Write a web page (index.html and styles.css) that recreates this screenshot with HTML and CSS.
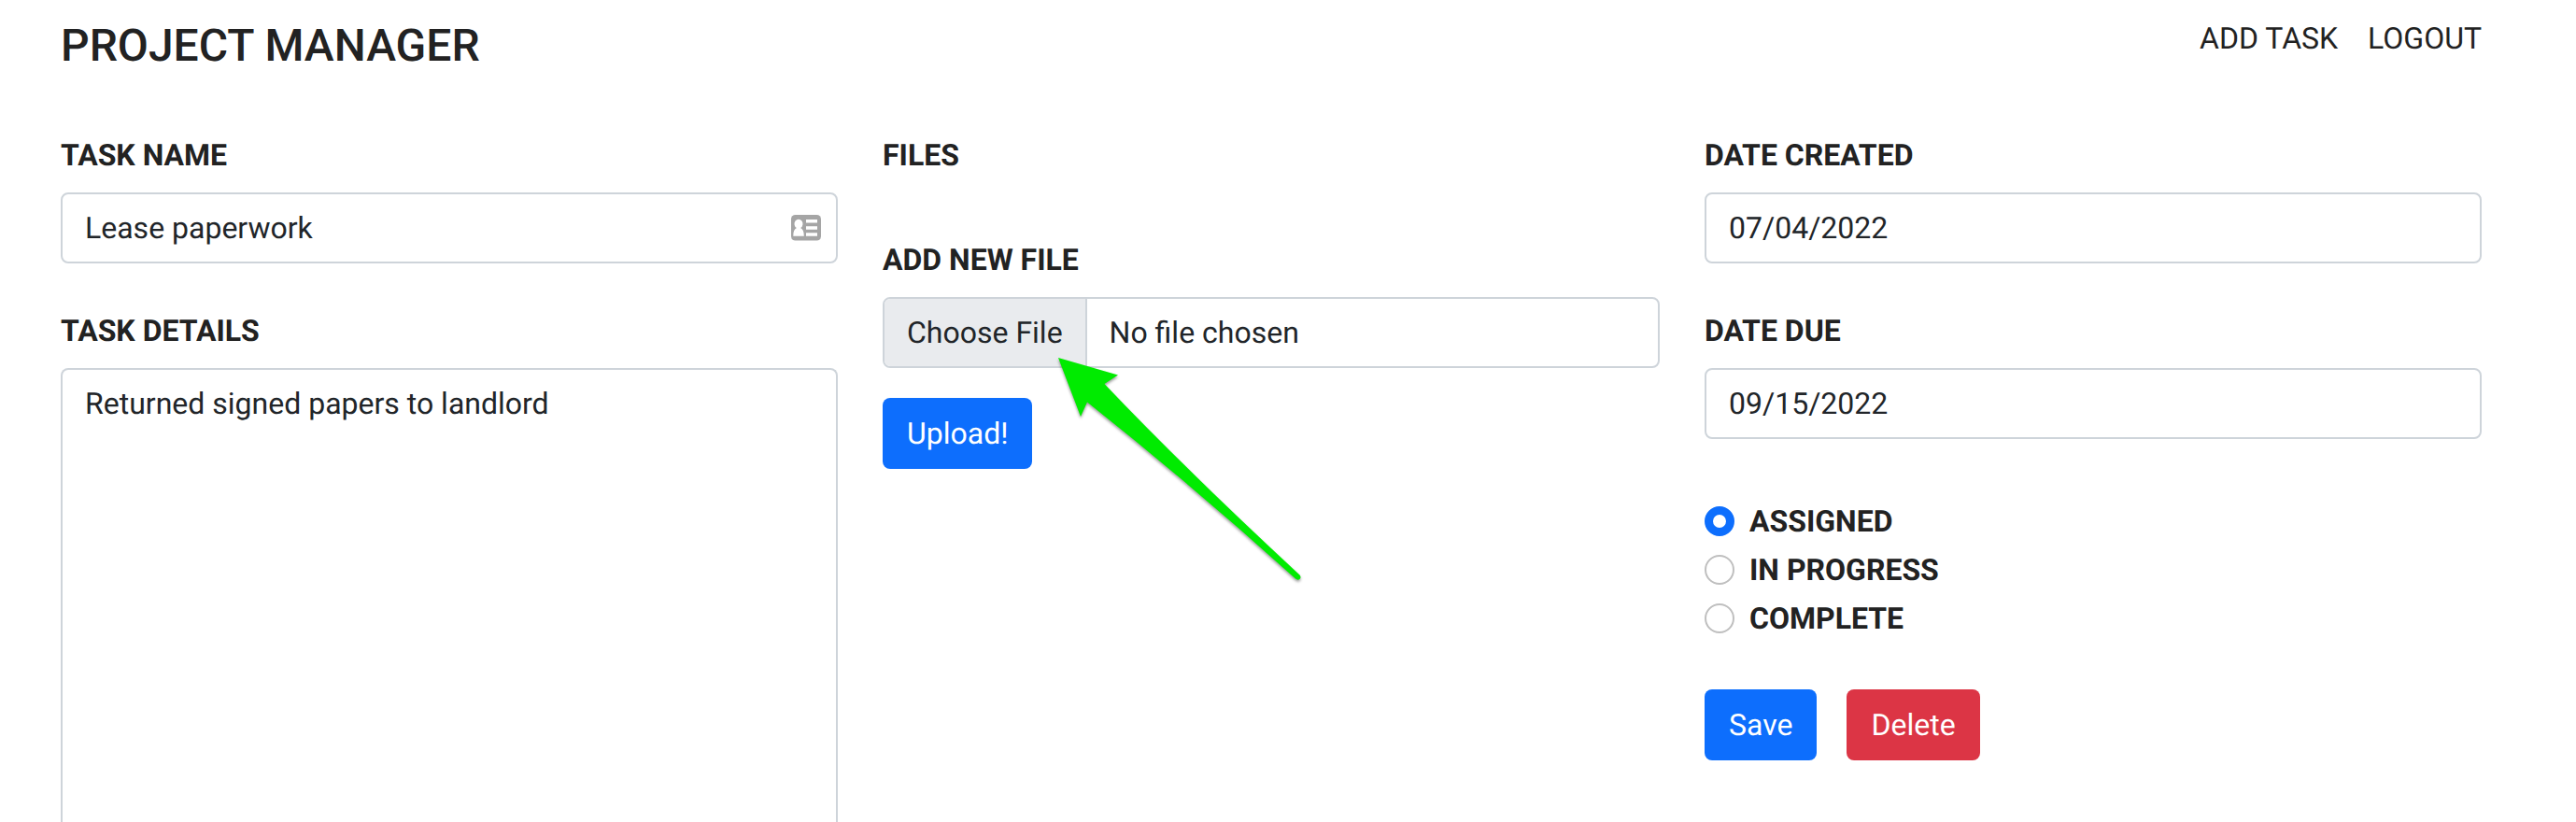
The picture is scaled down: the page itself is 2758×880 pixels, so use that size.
FILE: index.html
```html
<!DOCTYPE html>
<html lang="en">
<head>
<meta charset="utf-8">
<title>Project Manager</title>
<link rel="stylesheet" href="styles.css">
</head>
<body>
<div class="page">
<header class="header">
  <h1 class="title">PROJECT MANAGER</h1>
  <nav class="nav"><a class="nav-link">ADD TASK</a><a class="nav-link">LOGOUT</a></nav>
</header>
<main class="columns">
  <section class="column">
    <div class="group">
      <label class="label" for="name">TASK NAME</label>
      <div class="control-wrap">
        <input class="control" id="name" value="Lease paperwork">
        <svg class="contact-icon" viewBox="0 0 32 28" width="32" height="28">
          <rect width="32" height="27.5" rx="4.5" fill="#a5a5a5"/>
          <path d="M2.300 22.700c0-4.500 1.100-7.600 3.600-8.600a4.500 5 0 1 1 4.200 0c2.500 1 3.700 4.100 3.700 8.600z" fill="#fff"/>
          <path d="M16 5h12v3.400H16zM16 12.300h12v3.400H16zM16 19.300h12v3.400H16z" fill="#fff"/>
        </svg>
      </div>
    </div>
    <div class="group group-last">
      <label class="label" for="details">TASK DETAILS</label>
      <textarea class="control details" id="details">Returned signed papers to landlord</textarea>
    </div>
  </section>
  <section class="column">
    <div class="group files"><div class="label">FILES</div></div>
    <div class="group">
      <div class="label">ADD NEW FILE</div>
      <div class="control file"><span class="file-button">Choose File</span><span class="file-name">No file chosen</span></div>
    </div>
    <button class="btn upload">Upload!</button>
    <svg class="arrow" viewBox="0 0 270 246" width="270" height="246">
      <path d="M3 3L67 21.500L52.500 31Q138 121 261.500 235.500Q263.500 238 261.500 240Q259.500 241.500 257 239.500Q148 141 34 50.500L27 66Z" fill="#00eb00"/>
    </svg>
  </section>
  <section class="column">
    <div class="group">
      <label class="label" for="created">DATE CREATED</label>
      <input class="control" id="created" value="07/04/2022">
    </div>
    <div class="group">
      <label class="label" for="due">DATE DUE</label>
      <input class="control" id="due" value="09/15/2022">
    </div>
    <div class="status">
      <label class="check"><input class="radio" type="radio" name="status" checked>ASSIGNED</label>
      <label class="check"><input class="radio" type="radio" name="status">IN PROGRESS</label>
      <label class="check"><input class="radio" type="radio" name="status">COMPLETE</label>
    </div>
    <div class="actions"><button class="btn">Save</button><button class="btn btn-danger">Delete</button></div>
  </section>
</main>
</div>
</body>
</html>
```
FILE: styles.css
```css
* { box-sizing: border-box; }
body {
  margin: 0;
  background: #fff;
  color: #222;
  font: 400 32px/48px Roboto, sans-serif;
  text-rendering: geometricPrecision;
}
.page {
  height: 880px;
  overflow: hidden;
  padding: 0 101px 0 65px;
}
.header {
  display: flex;
  justify-content: space-between;
  align-items: flex-start;
  height: 142px;
}
.title { margin: 20px 0 0; font-size: 48px; font-weight: 500; line-height: 57.6px; }
.nav { display: flex; gap: 32px; padding-top: 17px; }
.columns { display: grid; grid-template-columns: repeat(3, 1fr); gap: 48px; }
.column { position: relative; }
.group { margin-bottom: 48px; }
.group-last { margin-bottom: 0; }
.label { display: block; margin-bottom: 16px; font-weight: 700; }
.control {
  display: block;
  width: 100%;
  height: 76px;
  padding: 12px 24px;
  border: 2px solid #ced4da;
  border-radius: 8px;
  background: #fff;
  color: #212529;
  font: inherit;
  text-rendering: inherit;
  outline: none;
}
.control-wrap { position: relative; }
.contact-icon { position: absolute; right: 18px; top: 24px; }
.details {
  height: 486px;
  border-bottom: 0;
  border-radius: 8px 8px 0 0;
  resize: none;
  overflow: hidden;
}
.files { height: 64px; }
.file { display: flex; padding: 0; overflow: hidden; }
.file-button {
  padding: 12px 24px;
  background: #e9ebee;
  border-right: 2px solid #ced4da;
}
.file-name { padding: 12px 24px; }
.btn {
  height: 76px;
  padding: 12px 26px;
  border: 0;
  border-radius: 8px;
  background: #0d6efd;
  color: #fff;
  font: inherit;
  text-rendering: inherit;
}
.btn-danger { background: #dc3545; }
.upload { display: block; margin-top: -16px; }
.arrow {
  position: absolute;
  left: 185px;
  top: 238px;
  filter: drop-shadow(0 2px 1.5px rgba(0, 0, 0, .4));
}
.status { display: grid; gap: 4px; padding-top: 16px; }
.check { display: flex; align-items: center; gap: 16px; height: 48px; font-weight: 700; }
.radio {
  appearance: none;
  width: 32px;
  height: 32px;
  margin: 0;
  border: 2px solid #bfbfbf;
  border-radius: 50%;
  background: #fff;
}
.radio:checked { border: 9px solid #0d6efd; }
.actions { display: flex; gap: 32px; margin-top: 52px; }
```
